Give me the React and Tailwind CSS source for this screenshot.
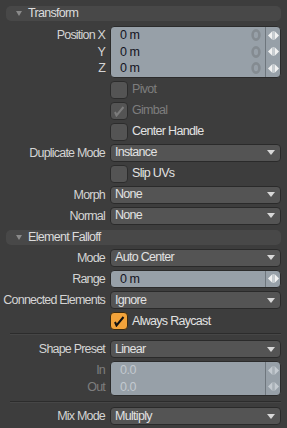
const FONT = { fontFamily: '"Liberation Sans", Arial, sans-serif' };

function Header({ title }) {
  return (
    <div className="mx-[6px] h-[15px] rounded-[5px] bg-[#484848] flex items-center">
      <svg width="6" height="5" viewBox="0 0 6 5" className="ml-[10px] mr-[6px]">
        <path d="M0 0 L6 0 L3 5 Z" fill="#8a8a8a" />
      </svg>
      <span className="text-[12.5px] text-[#dcdcdc] leading-none tracking-[-0.7px]">{title}</span>
    </div>
  );
}

function Row({ label, dim, children }) {
  return (
    <div className="flex">
      <div className={`w-[110px] shrink-0 pr-[5px] text-right text-[12.5px] leading-[18px] tracking-[-0.8px] whitespace-nowrap ${dim ? 'text-[#7e7e7e]' : 'text-[#d4d4d4]'}`}>
        {label}
      </div>
      <div className="flex-1 mr-[6px]">{children}</div>
    </div>
  );
}

function Dropdown({ value }) {
  return (
    <div className="h-[18px] rounded-[4px] border border-[#2a2a2a] bg-[#545454] flex items-center justify-between pl-[4px] pr-[5px]">
      <span className="text-[12.5px] text-[#e2e2e2] tracking-[-0.7px] leading-none">{value}</span>
      <svg width="8" height="5" viewBox="0 0 8 5">
        <path d="M0 0 L8 0 L4 5 Z" fill="#d8d8d8" />
      </svg>
    </div>
  );
}

function Arrows({ dim }) {
  const c = dim ? '#c4cad0' : '#f2f2f2';
  return (
    <svg width="11" height="9" viewBox="0 0 11 9">
      <path d="M0 4.5 L4.5 0 L4.5 9 Z" fill={c} />
      <path d="M11 4.5 L6.5 0 L6.5 9 Z" fill={c} />
      <rect x="5" y="0" width="1" height="9" fill={dim ? '#a8b0b6' : '#c8ced2'} />
    </svg>
  );
}

// grey "reset to zero" button inside the value column
function ResetIcon() {
  return (
    <svg width="10" height="12" viewBox="0 0 10 12">
      <ellipse cx="5" cy="6" rx="3.4" ry="4.6" fill="none" stroke="#848b91" strokeWidth="2.6" />
    </svg>
  );
}

function NumField({ values, dim, reset }) {
  return (
    <div className="rounded-[4px] border border-[#2b2b2b] bg-[#97a0a8] flex overflow-hidden">
      <div className="flex-1 flex flex-col">
        {values.map((v, i) => (
          <div key={i} className="h-[16.5px] flex items-center justify-between pl-[9px] pr-[4px]">
            <span className={`text-[12.5px] leading-none tracking-[-0.4px] ${dim ? 'text-[#c2c9cf]' : 'text-[#14141e]'}`}>{v}</span>
            {reset && <ResetIcon />}
          </div>
        ))}
      </div>
      <div className="w-[15px] border-l border-[#6e767d] flex flex-col">
        {values.map((v, i) => (
          <div key={i} className="h-[16.5px] flex items-center justify-center">
            <Arrows dim={dim} />
          </div>
        ))}
      </div>
    </div>
  );
}

function Check({ label, checked, dim, orange }) {
  return (
    <div className="flex items-center h-[18px] ml-[110px]">
      <div className={`w-[18px] h-[18px] rounded-[4px] border flex items-center justify-center ${orange ? 'bg-[#f2a33a] border-[#3a2a10]' : 'bg-[#545454] border-[#2c2c2c]'}`}>
        {checked && (
          <svg width="12" height="12" viewBox="0 0 12 12">
            <path d="M2 7 L3.5 10.5 L10.5 2" fill="none" stroke={orange ? '#111' : '#7c7c7c'} strokeWidth="2" strokeLinejoin="miter" />
          </svg>
        )}
      </div>
      <span className={`ml-[4px] text-[12.5px] tracking-[-0.7px] leading-none ${dim ? 'text-[#7e7e7e]' : 'text-[#e2e2e2]'}`}>{label}</span>
    </div>
  );
}

function Separator() {
  return <div className="ml-[10px] mr-[6px] h-[2px] border-t border-[#2c2c2c] border-b border-b-[#464646]" />;
}

function StackLabels({ labels, dim }) {
  return (
    <div className={`w-[110px] shrink-0 pr-[5px] text-right text-[12.5px] tracking-[-0.8px] pt-[1px] ${dim ? 'text-[#7e7e7e]' : 'text-[#d4d4d4]'}`}>
      {labels.map((l) => (
        <div key={l} className="h-[16.5px] leading-[16.5px]">{l}</div>
      ))}
    </div>
  );
}

export default function App() {
  return (
    <div className="w-[287px] h-[428px] bg-[#3d3d3d] overflow-hidden pt-[6px]" style={FONT}>
      <Header title="Transform" />
      <div className="mt-[5px] flex flex-col gap-[3px]">
        <div className="flex">
          <StackLabels labels={['Position X', 'Y', 'Z']} />
          <div className="flex-1 mr-[6px]">
            <NumField values={['0 m', '0 m', '0 m']} reset />
          </div>
        </div>
        <Check label="Pivot" dim />
        <Check label="Gimbal" dim checked />
        <Check label="Center Handle" />
        <Row label="Duplicate Mode"><Dropdown value="Instance" /></Row>
        <Check label="Slip UVs" />
        <Row label="Morph"><Dropdown value="None" /></Row>
        <Row label="Normal"><Dropdown value="None" /></Row>
      </div>
      <div className="mt-[5px]">
        <Header title="Element Falloff" />
      </div>
      <div className="mt-[4px] flex flex-col gap-[3px]">
        <Row label="Mode"><Dropdown value="Auto Center" /></Row>
        <Row label="Range"><NumField values={['0 m']} /></Row>
        <Row label="Connected Elements"><Dropdown value="Ignore" /></Row>
        <Check label="Always Raycast" checked orange />
      </div>
      <div className="mt-[3px]"><Separator /></div>
      <div className="mt-[5px] flex flex-col gap-[3px]">
        <Row label="Shape Preset"><Dropdown value="Linear" /></Row>
        <div className="flex">
          <StackLabels labels={['In', 'Out']} dim />
          <div className="flex-1 mr-[6px]">
            <NumField values={['0.0', '0.0']} dim />
          </div>
        </div>
      </div>
      <div className="mt-[5px]"><Separator /></div>
      <div className="mt-[4px]">
        <Row label="Mix Mode"><Dropdown value="Multiply" /></Row>
      </div>
    </div>
  );
}
